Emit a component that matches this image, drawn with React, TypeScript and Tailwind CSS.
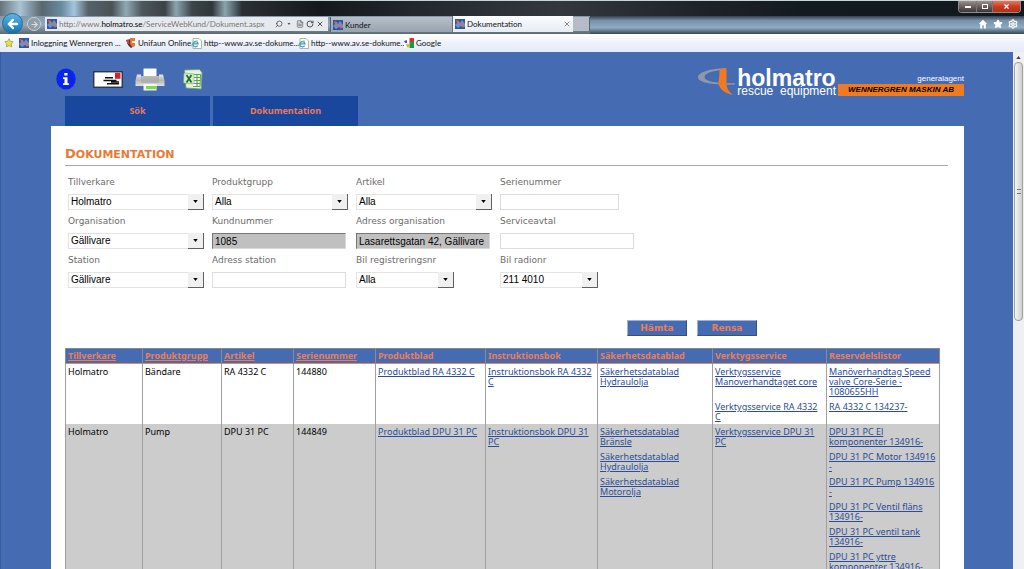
import React from "react";
import { Search, RotateCw, X, FileText, Star, Settings, ArrowLeft, ArrowRight } from "lucide-react";

const options: Record<string, string[]> = {
  maker: ["Holmatro"],
  place: ["Gällivare"],
  all: ["Alla"],
  radio: ["211 4010"],
};

function SelectField({ id, label, values, width }: { id: string; label: string; values: string[]; width: string }) {
  return (
    <div className="flex flex-col items-start">
      <label htmlFor={id} className="h-[18px] leading-[13px] text-[9px] text-[#6b6b6b]">{label}</label>
      <div className={`relative h-4 ${width}`}>
        <select id={id} className="block h-4 w-full appearance-none rounded-none border border-[#e3e3e3] bg-white pl-[2px] pr-4 font-['Liberation_Sans',Arial,sans-serif] text-[10px] leading-[14px] text-black outline-none">
          {values.map((v) => (
            <option key={v}>{v}</option>
          ))}
        </select>
        <span className="pointer-events-none absolute right-0 top-0 flex h-4 w-4 items-center justify-center border-b border-r border-[#606060] bg-[#f0f0f0]">
          <svg viewBox="0 0 6 4" className="h-[3px] w-[5px]"><path d="M0 0h6L3 4z" fill="#000" /></svg>
        </span>
      </div>
    </div>
  );
}

function TextField({ id, label, value = "", readOnly = false, width }: { id: string; label: string; value?: string; readOnly?: boolean; width: string }) {
  const look = readOnly
    ? "bg-[#c0c0c0] border-[#d8d8d8] border-t-[#777] border-l-[#777]"
    : "bg-white border-[#dcdcdc]";
  return (
    <div className="flex flex-col items-start">
      <label htmlFor={id} className="h-[18px] leading-[13px] text-[9px] text-[#6b6b6b]">{label}</label>
      <input id={id} type="text" defaultValue={value} readOnly={readOnly} className={`block h-4 rounded-none border px-[2px] font-['Liberation_Sans',Arial,sans-serif] text-[10px] leading-[14px] text-black outline-none ${look} ${width}`} />
    </div>
  );
}

function SiteIcon({ className = "h-[10px] w-[10px]" }: { className?: string }) {
  return (
    <svg viewBox="0 0 10 10" className={`shrink-0 ${className}`}>
      <rect width="10" height="10" fill="#31559f" />
      <path d="M0 6l3-3 2 1 2-3 3 4v3L6 7l-3 2z" fill="#6f8fc6" />
      <path d="M1 1l3 1 1 3-3-1zM6 4l3 3-1 2-2-3z" fill="#d0705a" />
    </svg>
  );
}

function PageIcon() {
  return (
    <svg viewBox="0 0 11 11" className="h-[11px] w-[11px] shrink-0">
      <path d="M2 .5h6L10.500 3v7.500H2z" fill="#fff" stroke="#9aa49a" strokeWidth=".8" />
      <path d="M6.600 7.600A2.600 2.600 0 1 1 7 5.900H2.300" fill="none" stroke="#3c9ad0" strokeWidth="1.300" />
      <path d="M.8 8.200C.5 5.500 4 2.600 7 3" fill="none" stroke="#7cb93f" strokeWidth=".9" />
    </svg>
  );
}

function UnifaunIcon() {
  return (
    <svg viewBox="0 0 10 10" className="h-[10px] w-[10px] shrink-0">
      <path d="M0 2l5-1v4l3 3-3 2-3-3z" fill="#5b2a2c" />
      <path d="M4 0h5v3H6v2h3v3L6 9 4 6z" fill="#ee7330" />
      <path d="M1 2h2v4H1z" fill="#c9484b" />
    </svg>
  );
}

function GoogleIcon() {
  return (
    <svg viewBox="0 0 10 10" className="h-[10px] w-[10px] shrink-0">
      <rect width="10" height="10" fill="#fff" />
      <path d="M5.500 0H10v4H5.500z" fill="#d92f25" />
      <path d="M5.500 4H10v6H5.500z" fill="#139a4b" />
      <path d="M0 3l3-1v3H1z" fill="#2b62c9" />
      <path d="M2 6h3v3.500H3z" fill="#e8b31d" />
    </svg>
  );
}

const favourites = [
  { label: "Inloggning Wennergren ...", icon: <SiteIcon />, width: "w-[107px]" },
  { label: "Unifaun Online", icon: <UnifaunIcon />, width: "w-[65px]" },
  { label: "http--www.av.se-dokume...", icon: <PageIcon />, width: "w-[107px]" },
  { label: "http--www.av.se-dokume...", icon: <PageIcon />, width: "w-[106px]" },
  { label: "Google", icon: <GoogleIcon />, width: "w-[50px]" },
];

function BrowserChrome() {
  return (
    <header className="shrink-0 font-[Lato,'Noto_Sans',sans-serif] text-[8px] text-[#111]">
      <div className="flex h-4 items-start justify-end border-t border-[#c5d5d8] bg-[linear-gradient(90deg,#65737a_0px,#a9c4d6_20px,#59666e_42px,#6b8ba0_62px,#a5c5dd_74px,#56626a_88px,#4a5257_112px,#8fa9b4_126px,#4d565b_142px,#3c4347_165px,#8aa5af_176px,#3d4549_192px,#30363a_212px,#8aa5ad_225px,#2b3034_242px,#15181c_320px,#252a31_430px,#34373e_560px,#1e2329_700px,#131a20_800px,#11181e_100%)] pr-[3px]">
        <div className="flex h-3 overflow-hidden rounded-b border border-t-0 border-[#8b8f93]">
          <button aria-label="Minimera" className="flex w-[17px] items-center justify-center bg-linear-to-b from-[#9b8f8b] to-[#3f3533]"><span className="h-[2px] w-[6px] bg-white" /></button>
          <button aria-label="Återställ" className="flex w-4 items-center justify-center border-l border-[#777] bg-linear-to-b from-[#9b8f8b] to-[#3f3533]"><span className="h-[5px] w-[6px] border border-white" /></button>
          <button aria-label="Stäng" className="flex w-7 items-center justify-center border-l border-[#777] bg-linear-to-b from-[#e07862] via-[#c93c20] to-[#b92d12] text-white"><X size={7} strokeWidth={4} /></button>
        </div>
      </div>
      <div className="flex h-[18px] items-stretch bg-linear-to-b from-[#8498aa] via-[#94a9bd] to-[#5c6873]">
        <div className="relative w-[45px] shrink-0">
          <button aria-label="Bakåt" className="absolute -top-[3px] left-[2px] flex h-[21px] w-[21px] items-center justify-center rounded-full border border-[#2b6795] bg-linear-to-b from-[#58b7df] to-[#0d72b7] text-white"><ArrowLeft size={14} strokeWidth={4} /></button>
          <button aria-label="Framåt" className="absolute left-[27px] top-px flex h-[14px] w-[14px] items-center justify-center rounded-full border border-[#c9ced2] bg-[#929ca4] text-[#d9dde0]"><ArrowRight size={9} strokeWidth={3} /></button>
        </div>
        <div className="mt-px flex h-[14px] w-[283px] shrink-0 items-center bg-[#e6eaef] pl-[2px] pr-1 text-[#555]">
          <SiteIcon className="mr-[2px] h-[10px] w-[10px]" />
          <span className="flex-1 whitespace-nowrap text-[#777]">http://www.<span className="text-black">holmatro.se</span>/ServiceWebKund/Dokument.aspx</span>
          <Search size={8} strokeWidth={2.5} className="-scale-x-100" />
          <svg viewBox="0 0 6 4" className="ml-[4px] h-[2px] w-[4px]"><path d="M0 0h6L3 4z" fill="#555" /></svg>
          <FileText size={8} className="ml-[5px]" />
          <RotateCw size={8} strokeWidth={3} className="ml-[2px]" />
          <X size={8} strokeWidth={3} className="ml-[2px]" />
        </div>
        <a href="#kunder" className="ml-[2px] mt-px flex h-[15px] w-[122px] shrink-0 items-center gap-[2px] border-l border-[#59636c] bg-linear-to-b from-[#b7c0ca] to-[#98a3af] pl-[2px]"><SiteIcon />Kunder</a>
        <div className="flex h-4 w-[121px] shrink-0 items-center gap-[2px] border-l border-[#68727b] bg-linear-to-b from-[#fbfcfd] to-[#e6ecf5] pl-[2px] pr-[2px]">
          <SiteIcon /><a href="#dokumentation" className="flex-1">Dokumentation</a>
          <button aria-label="Stäng flik" className="text-[#888]"><X size={8} strokeWidth={3} /></button>
        </div>
        <div className="mt-px h-[14px] w-[17px] shrink-0 border-r border-[#59636c] bg-[#b4bdc7]" />
        <nav className="flex flex-1 items-center justify-end gap-[5px] bg-[linear-gradient(180deg,#34404d_0%,#7691a9_25%,#8eabc4_65%,#55697b_88%,#3b4650_100%)] pb-[2px] pr-[6px] text-white">
          <button aria-label="Startsida"><svg viewBox="0 0 10 10" className="h-[10px] w-[10px]"><path d="M5 .8L.8 4.800h1.400V9.500h2V6.200h1.600v3.300h2V4.800h1.400z" fill="#fff" /></svg></button>
          <button aria-label="Favoriter"><Star size={10} fill="white" /></button>
          <button aria-label="Verktyg"><Settings size={10} strokeWidth={3} /></button>
        </nav>
      </div>
      <div className="flex h-[18px] items-center bg-linear-to-b from-white via-[#eef2fa] to-[#e4ebf7] pl-1">
        <button aria-label="Lägg till favorit" className="mr-[5px] text-[#a5a42e]"><Star size={10} fill="#e9dd4a" strokeWidth={2} /></button>
        {favourites.map((f, i) => (
          <a key={i} href="#favorit" className={`flex shrink-0 items-center gap-[2px] whitespace-nowrap ${f.width}`}>{f.icon}{f.label}</a>
        ))}
      </div>
    </header>
  );
}

function InfoIcon() {
  return (
    <svg viewBox="0 0 20 22" className="h-[22px] w-5">
      <ellipse cx="10" cy="11" rx="9.700" ry="10.500" fill="#0a24f0" />
      <path d="M8.300 5h3.200v2.600H8.300zM7 9.200h4.500v6h1.400V17H7v-1.800h1.500V11H7z" fill="#fff" />
    </svg>
  );
}

function MailIcon() {
  return (
    <svg viewBox="0 0 30 17" className="h-[17px] w-[30px]">
      <rect x=".8" y=".8" width="28.400" height="15.400" fill="#fff" stroke="#1d2430" strokeWidth="1.200" />
      <rect x="22" y="1.800" width="5.500" height="6" fill="#d8232a" />
      <path d="M12 6.800h8M10.500 9.500h13M14 12.800h12M18 11h8" stroke="#111" strokeWidth="1.500" />
    </svg>
  );
}

function PrinterIcon() {
  return (
    <svg viewBox="0 0 32 23" className="h-[23px] w-8">
      <defs>
        <linearGradient id="printerBody" x1="0" y1="0" x2="0" y2="1">
          <stop offset="0" stopColor="#e8e8e8" />
          <stop offset=".5" stopColor="#b4b4b4" />
          <stop offset="1" stopColor="#e2e2e2" />
        </linearGradient>
      </defs>
      <path d="M9.500.5h13v8h-13z" fill="#fbfbfb" />
      <path d="M3 6.500h4V8h18V6.500h4l1.500 6V18h-29v-5.500z" fill="url(#printerBody)" />
      <path d="M7 8h18v7H7z" fill="#a4a6a6" opacity=".6" />
      <path d="M9.500 16h13v6.500h-13z" fill="#f4f4f4" />
      <path d="M12 18h10v3H12z" fill="#7fdc3c" />
    </svg>
  );
}

function ExcelIcon() {
  return (
    <svg viewBox="0 0 22 21" className="h-[21px] w-[22px]">
      <path d="M2.500 1l15-.5 2.500 3-.8 16.500L4 19z" fill="#e6f2df" stroke="#62a55c" strokeWidth=".8" />
      <path d="M11 5.500h7.500L18 17.500h-7" fill="#fff" stroke="#58a450" />
      <path d="M12 8.500h6M12 11.500h6M12 14.500h6M15 6v11.500" stroke="#58a450" strokeWidth="1.200" />
      <path d="M2 4l10 1v10L1.500 14z" fill="#d8edcf" stroke="#6cae66" strokeWidth=".6" />
      <path d="M4.500 6l5 7.500M9.500 6l-5 7.500" stroke="#1f7030" strokeWidth="1.800" />
    </svg>
  );
}

function Logo() {
  return (
    <div className="flex items-start">
      <svg viewBox="0 0 39 28" className="h-7 w-[39px]">
        <path fillRule="evenodd" d="M28 .3C12 .3 0 4.500 0 9.500 0 14 13 17.500 37 16.500v-1.300C20 15.800 6.500 13.500 6.500 9 6.500 5.500 14 2.500 28 1.800z" fill="#8f98a8" />
        <path d="M21.500 1.500q3-1 7-1v14c0 6 2 9 6.500 12.200-8-1-14.500-6-14.500-12.500q1-6 1-12.700z" fill="#f07a22" />
      </svg>
      <div className="flex flex-col pt-px text-white">
        <span className="text-[23px] font-bold leading-[18px]">holmatro</span>
        <span className="text-[12px] leading-[9px]">rescue&nbsp; equipment</span>
      </div>
      <div className="ml-[2px] mt-[5px] flex flex-col items-end">
        <span className="text-[8px] leading-[11px] text-white">generalagent</span>
        <span className="w-[126px] whitespace-nowrap bg-[#f07a22] text-center text-[8px] font-bold italic leading-[12px] text-black">WENNERGREN MASKIN AB</span>
      </div>
    </div>
  );
}

const sortable = ["Tillverkare", "Produktgrupp", "Artikel", "Serienummer"];
const plain = ["Produktblad", "Instruktionsbok", "Säkerhetsdatablad", "Verktygsservice", "Reservdelslistor"];
const spareParts = [
  "DPU 31 PC El komponenter 134916-",
  "DPU 31 PC Motor 134916 -",
  "DPU 31 PC Pump 134916 -",
  "DPU 31 PC Ventil fläns 134916-",
  "DPU 31 PC ventil tank 134916-",
  "DPU 31 PC yttre komponenter 134916-",
];

function DocLinks({ items }: { items: string[] }) {
  return (
    <ul className="flex flex-col gap-[5px]">
      {items.map((t) => (
        <li key={t}><a href="#dokument" className="text-[#2b4c97] underline">{t}</a></li>
      ))}
    </ul>
  );
}

const cell = "border-x border-[#a0a0a0] px-[2px] pt-[3px] pb-[2px] align-top";

function ResultTable() {
  return (
    <table className="mt-3 w-[99%] table-fixed border-collapse text-left font-['Noto_Sans',Verdana,sans-serif] text-[9px] leading-[10px] text-black">
      <colgroup>
        <col className="w-[77px]" /><col className="w-[79px]" /><col className="w-[72px]" /><col className="w-[82px]" />
        <col className="w-[110px]" /><col className="w-[112px]" /><col className="w-[115px]" /><col className="w-[114px]" /><col className="w-[113px]" />
      </colgroup>
      <thead>
        <tr className="h-[15px] border-b border-t border-b-[#e58a60] border-t-[#888] bg-[#456cb3] text-[#f07c4e]">
          {sortable.map((h) => (
            <th key={h} className="border-x border-[#8a8a98] px-[2px] font-bold"><a href="#sortera" className="underline">{h}</a></th>
          ))}
          {plain.map((h) => (
            <th key={h} className="border-x border-[#8a8a98] px-[2px] font-bold">{h}</th>
          ))}
        </tr>
      </thead>
      <tbody>
        <tr>
          <td rowSpan={2} className={cell}>Holmatro</td>
          <td rowSpan={2} className={cell}>Bändare</td>
          <td rowSpan={2} className={cell}>RA 4332 C</td>
          <td rowSpan={2} className={cell}>144880</td>
          <td rowSpan={2} className={cell}><DocLinks items={["Produktblad RA 4332 C"]} /></td>
          <td rowSpan={2} className={cell}><DocLinks items={["Instruktionsbok RA 4332 C"]} /></td>
          <td rowSpan={2} className={cell}><DocLinks items={["Säkerhetsdatablad Hydraulolja"]} /></td>
          <td className={cell}><DocLinks items={["Verktygsservice Manoverhandtaget core"]} /></td>
          <td className={cell}><DocLinks items={["Manöverhandtag Speed valve Core-Serie - 1080655HH"]} /></td>
        </tr>
        <tr>
          <td className={cell}><DocLinks items={["Verktygsservice RA 4332 C"]} /></td>
          <td className={cell}><DocLinks items={["RA 4332 C 134237-"]} /></td>
        </tr>
        <tr className="bg-[#cccccc]">
          <td className={cell}>Holmatro</td>
          <td className={cell}>Pump</td>
          <td className={cell}>DPU 31 PC</td>
          <td className={cell}>144849</td>
          <td className={cell}><DocLinks items={["Produktblad DPU 31 PC"]} /></td>
          <td className={cell}><DocLinks items={["Instruktionsbok DPU 31 PC"]} /></td>
          <td className={cell}><DocLinks items={["Säkerhetsdatablad Bränsle", "Säkerhetsdatablad Hydraulolja", "Säkerhetsdatablad Motorolja"]} /></td>
          <td className={cell}><DocLinks items={["Verktygsservice DPU 31 PC"]} /></td>
          <td className={cell}><DocLinks items={spareParts} /></td>
        </tr>
      </tbody>
    </table>
  );
}

export default function App() {
  const button = "h-4 w-[60px] border border-[#3b4f7d] border-l-[#9db1da] border-t-[#9db1da] bg-[#456cb3] text-[9px] font-bold leading-[14px] text-[#f07c4e]";
  const tab = "flex h-[30px] w-[145px] items-center justify-center bg-[#19479e]";
  return (
    <div className="flex h-screen flex-col overflow-hidden bg-[#456cb3]">
      <BrowserChrome />
      <div className="flex min-h-0 flex-1">
        <div className="flex flex-1 flex-col overflow-hidden border-l border-[#3a5c9c] pl-[50px] pr-[49px] font-['DejaVu_Sans',Verdana,sans-serif]">
          <div className="flex h-[74px] shrink-0 items-stretch justify-between">
            <div className="flex flex-col justify-between">
              <div className="flex h-[44px] items-center pl-[5px] pt-[10px]">
                <button aria-label="Information"><InfoIcon /></button>
                <button aria-label="E-post" className="ml-[17px]"><MailIcon /></button>
                <button aria-label="Skriv ut" className="ml-[11px]"><PrinterIcon /></button>
                <button aria-label="Exportera till Excel" className="ml-4"><ExcelIcon /></button>
              </div>
              <nav className="flex gap-[3px] pl-[14px] font-['Noto_Sans',Verdana,sans-serif] text-[9px] font-bold text-[#e97b5a]">
                <a href="#sok" className={tab}>Sök</a>
                <a href="#dokumentation" className={tab}>Dokumentation</a>
              </nav>
            </div>
            <div className="pt-4 font-['Liberation_Sans',Arial,sans-serif]"><Logo /></div>
          </div>
          <main className="flex-1 overflow-hidden bg-white pl-[14px] pr-4 pt-5">
            <h1 className="border-b border-[#a8a8a8] pb-[2px] text-[11px] font-bold uppercase leading-4 text-[#e87a35] first-letter:text-[13px]">Dokumentation</h1>
            <form onSubmit={(e) => e.preventDefault()}>
              <div className="grid grid-cols-[144px_144px_144px_144px] gap-y-[5px] pl-[3px] pt-[10px]">
                <SelectField id="tillverkare" label="Tillverkare" values={options.maker} width="w-[136px]" />
                <SelectField id="produktgrupp" label="Produktgrupp" values={options.all} width="w-[136px]" />
                <SelectField id="artikel" label="Artikel" values={options.all} width="w-[136px]" />
                <TextField id="serienummer" label="Serienummer" width="w-[119px]" />
                <SelectField id="organisation" label="Organisation" values={options.place} width="w-[136px]" />
                <TextField id="kundnummer" label="Kundnummer" value="1085" readOnly width="w-[134px]" />
                <TextField id="adressorg" label="Adress organisation" value="Lasarettsgatan 42, Gällivare" readOnly width="w-[134px]" />
                <TextField id="serviceavtal" label="Serviceavtal" width="w-[134px]" />
                <SelectField id="station" label="Station" values={options.place} width="w-[136px]" />
                <TextField id="adress" label="Adress station" width="w-[134px]" />
                <SelectField id="bilreg" label="Bil registreringsnr" values={options.all} width="w-[98px]" />
                <SelectField id="bilradio" label="Bil radionr" values={options.radio} width="w-[98px]" />
              </div>
              <div className="mt-8 flex justify-end gap-[10px] pr-[191px]">
                <button type="submit" className={button}>Hämta</button>
                <button type="reset" className={button}>Rensa</button>
              </div>
            </form>
            <ResultTable />
          </main>
        </div>
        <div className="flex w-[11px] shrink-0 flex-col items-center bg-[#f0f0f0]" aria-hidden="true">
          <span className="flex h-[10px] items-center"><svg viewBox="0 0 6 4" className="h-[3px] w-[5px]"><path d="M0 4h6L3 0z" fill="#444" /></svg></span>
          <span className="flex h-1/2 w-[9px] items-center justify-center rounded-sm border border-[#a0a0a0] bg-linear-to-r from-[#f5f5f5] to-[#cfcfd2]"><span className="h-[5px] w-1 border-y border-[#777]" /></span>
        </div>
      </div>
    </div>
  );
}
